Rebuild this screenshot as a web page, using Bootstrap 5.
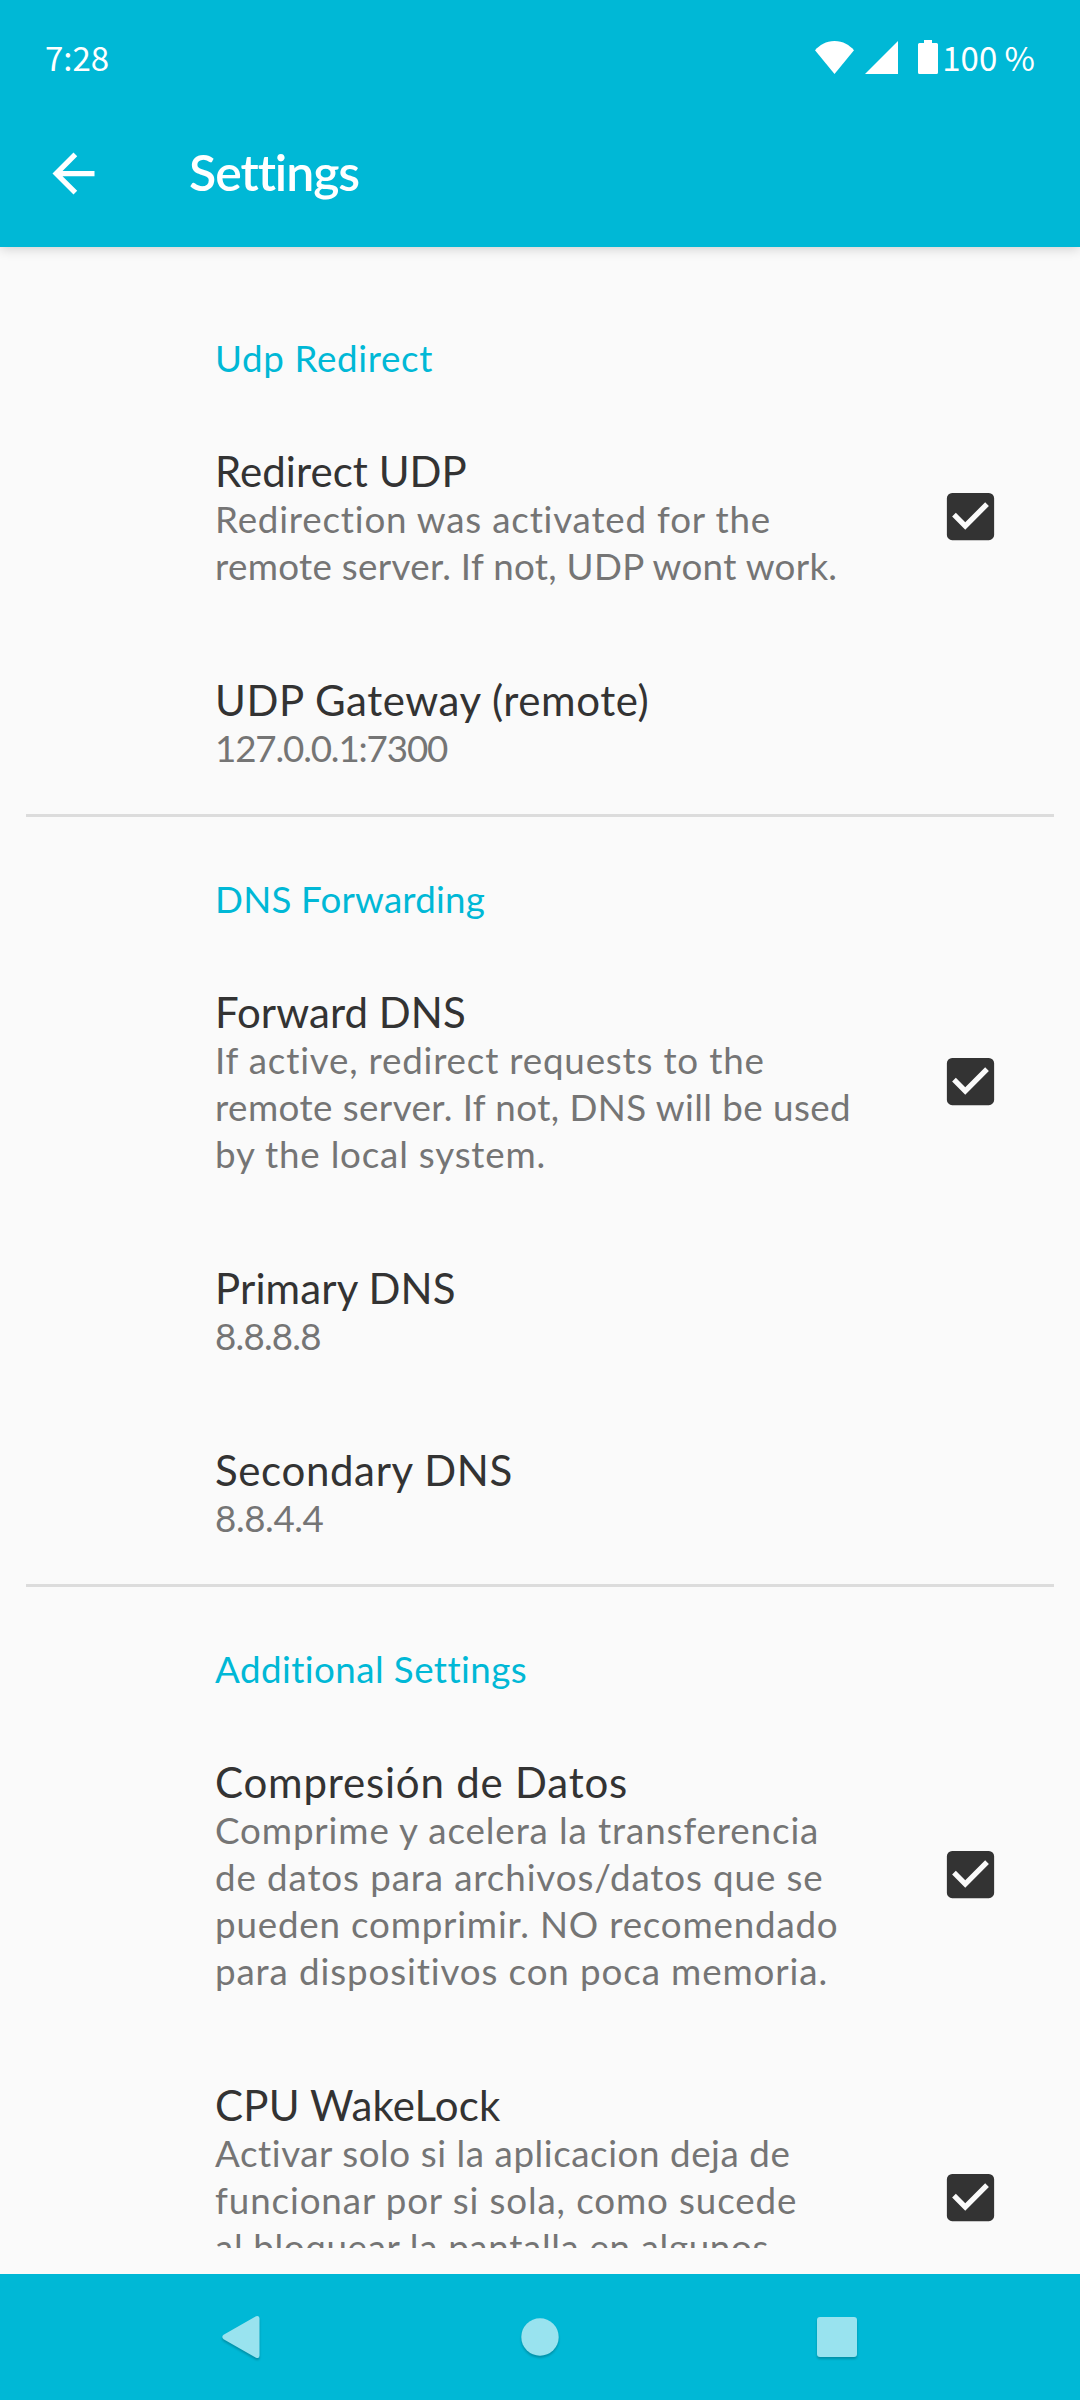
<!DOCTYPE html>
<html lang="es">
<head>
<meta charset="utf-8">
<meta name="viewport" content="width=device-width, initial-scale=1">
<title>Settings</title>
<link href="https://cdn.jsdelivr.net/npm/bootstrap@5.3.0/dist/css/bootstrap.min.css" rel="stylesheet">
<style>
  :root { --accent: #00b8d6; --page: #fafafa; --ink: #333; --muted-ink: #757575; }
  body { width: 1080px; height: 2400px; background: var(--page); font-family: Lato, "Liberation Sans", sans-serif; }
  svg { display: block; flex: none; }
  .accent-bg { background: var(--accent); }
  .top-bars { height: 247px; box-shadow: 0 1px 12px rgba(0,0,0,.2); z-index: 2; }
  .status-bar { height: 100px; padding: 14px 45px 0 45px; font: 400 33px/1 "Noto Sans CJK SC", "Noto Sans", sans-serif; }
  .status-icons { gap: 11px; }
  .battery { margin-left: 9px; margin-right: -7px; }
  .toolbar { height: 147px; padding-left: 42px; }
  .toolbar-title { font-size: 50px; font-weight: 600; line-height: 60px; letter-spacing: -1.05px; margin: 0 0 4px 84px; }
  .prefs { height: 2001px; overflow: hidden; }
  .section-head { color: var(--accent); font-size: 36.75px; line-height: 47px; padding: 59px 0 21px 215px; }
  .section-first { padding-top: 88px; }
  .pref { padding: 43px 78.5px 42px 215px; }
  .pref-title { color: var(--ink); font-size: 42px; line-height: 50px; }
  .pref-text { color: var(--muted-ink); font-size: 36.75px; line-height: 47px; }
  .pref-text span { display: block; }
  .pref-tall { height: 323px; }
  .check-icon { margin-bottom: 3px; }
  .rule { height: 3px; background: #dcdcdc; margin: 0 26px; }
  .nav-keys { height: 126px; gap: 253px; }
  .nav-keys svg { filter: drop-shadow(0 2px 1px rgba(0,0,0,.22)); fill: #99e3ef; }
  .t-n115 { letter-spacing: -1.15px; }
  .t-n80 { letter-spacing: -.8px; }
  .t-n40 { letter-spacing: -.4px; }
  .t-05 { letter-spacing: .05px; }
  .t-12 { letter-spacing: .14px; }
  .t-20 { letter-spacing: .19px; }
  .t-30 { letter-spacing: .31px; }
  .t-43 { letter-spacing: .43px; }
  .t-55 { letter-spacing: .56px; }
  .t-65 { letter-spacing: .64px; }
  .t-80 { letter-spacing: .8px; }
  .t-88 { letter-spacing: .88px; }
</style>
</head>
<body class="d-flex flex-column overflow-hidden">
<svg width="0" height="0" class="position-absolute" aria-hidden="true">
  <symbol id="checked" viewBox="0 0 24 24"><path fill="#333" d="M19 3H5a2 2 0 0 0-2 2v14a2 2 0 0 0 2 2h14a2 2 0 0 0 2-2V5a2 2 0 0 0-2-2zM10 17l-5-5 1.410-1.410L10 14.170l7.590-7.590L19 8z"/></symbol>
</svg>

<header class="top-bars accent-bg text-white position-relative flex-shrink-0">
  <div class="status-bar d-flex justify-content-between">
    <div class="d-flex align-items-center">7:28</div>
    <div class="status-icons d-flex align-items-center">
      <svg width="39" height="33" viewBox="0 0 39 33" fill="#fff"><path d="M19.500 33 0 9.200C4.500 4.200 11 0 19.500 0S34.500 4.200 39 9.200z"/></svg>
      <svg width="33" height="33" viewBox="0 0 33 33" fill="#fff"><path d="M33 0v33H0z"/></svg>
      <svg class="battery" width="20" height="34" viewBox="0 0 20 34" fill="#fff"><path d="M6 0h8v3h4.500A1.500 1.500 0 0 1 20 4.500v28a1.500 1.500 0 0 1-1.500 1.500h-17A1.500 1.500 0 0 1 0 32.500v-28A1.500 1.500 0 0 1 1.500 3H6z"/></svg>
      <span>100 %</span>
    </div>
  </div>
  <div class="toolbar d-flex align-items-center">
    <svg width="63" height="63" viewBox="0 0 24 24" fill="#fff"><path d="M20 11H7.830l5.590-5.590L12 4l-8 8 8 8 1.410-1.410L7.830 13H20z"/></svg>
    <h1 class="toolbar-title">Settings</h1>
  </div>
</header>

<main class="prefs flex-shrink-0">
  <section>
    <div class="section-head section-first t-65">Udp Redirect</div>
    <div class="pref d-flex align-items-center justify-content-between">
      <div>
        <div class="pref-title t-05">Redirect UDP</div>
        <div class="pref-text text-nowrap"><span class="t-80">Redirection was activated for the</span><span class="t-30">remote server. If not, UDP wont work.</span></div>
      </div>
      <svg class="check-icon" width="63" height="63"><use href="#checked"/></svg>
    </div>
    <div class="pref">
      <div class="pref-title t-55">UDP Gateway (remote)</div>
      <div class="pref-text t-n115">127.0.0.1:7300</div>
    </div>
  </section>
  <div class="rule"></div>
  <section>
    <div class="section-head t-20">DNS Forwarding</div>
    <div class="pref d-flex align-items-center justify-content-between">
      <div>
        <div class="pref-title t-05">Forward DNS</div>
        <div class="pref-text text-nowrap"><span class="t-80">If active, redirect requests to the</span><span class="t-43">remote server. If not, DNS will be used</span><span class="t-80">by the local system.</span></div>
      </div>
      <svg class="check-icon" width="63" height="63"><use href="#checked"/></svg>
    </div>
    <div class="pref">
      <div class="pref-title t-12">Primary DNS</div>
      <div class="pref-text t-n80">8.8.8.8</div>
    </div>
    <div class="pref">
      <div class="pref-title t-65">Secondary DNS</div>
      <div class="pref-text t-n40">8.8.4.4</div>
    </div>
  </section>
  <div class="rule"></div>
  <section>
    <div class="section-head t-43">Additional Settings</div>
    <div class="pref d-flex align-items-center justify-content-between">
      <div>
        <div class="pref-title t-80">Compresión de Datos</div>
        <div class="pref-text text-nowrap"><span class="t-88">Comprime y acelera la transferencia</span><span class="t-88">de datos para archivos/datos que se</span><span class="t-80">pueden comprimir. NO recomendado</span><span class="t-88">para dispositivos con poca memoria.</span></div>
      </div>
      <svg class="check-icon" width="63" height="63"><use href="#checked"/></svg>
    </div>
    <div class="pref pref-tall d-flex justify-content-between">
      <div>
        <div class="pref-title t-20">CPU WakeLock</div>
        <div class="pref-text text-nowrap"><span class="t-55">Activar solo si la aplicacion deja de</span><span class="t-88">funcionar por si sola, como sucede</span><span class="t-65">al bloquear la pantalla en algunos</span></div>
      </div>
      <svg class="check-icon align-self-center" width="63" height="63"><use href="#checked"/></svg>
    </div>
  </section>
</main>

<nav class="nav-keys accent-bg d-flex justify-content-center align-items-center mt-auto flex-shrink-0">
  <svg width="44" height="44" viewBox="2 0 44 44"><path d="M4.600 19.800 37 1.200Q40.500 0 40.500 3.500v37q0 3.500-3.500 2.300L4.600 24.200q-2.600-2.200 0-4.400z"/></svg>
  <svg width="44" height="44" viewBox="0 0 44 44"><circle cx="22" cy="22" r="18.700"/></svg>
  <svg width="44" height="44" viewBox="0 0 44 44"><rect x="2" y="2" width="40" height="40" rx="3"/></svg>
</nav>
<script src="https://cdn.jsdelivr.net/npm/bootstrap@5.3.0/dist/js/bootstrap.bundle.min.js"></script>
</body>
</html>
